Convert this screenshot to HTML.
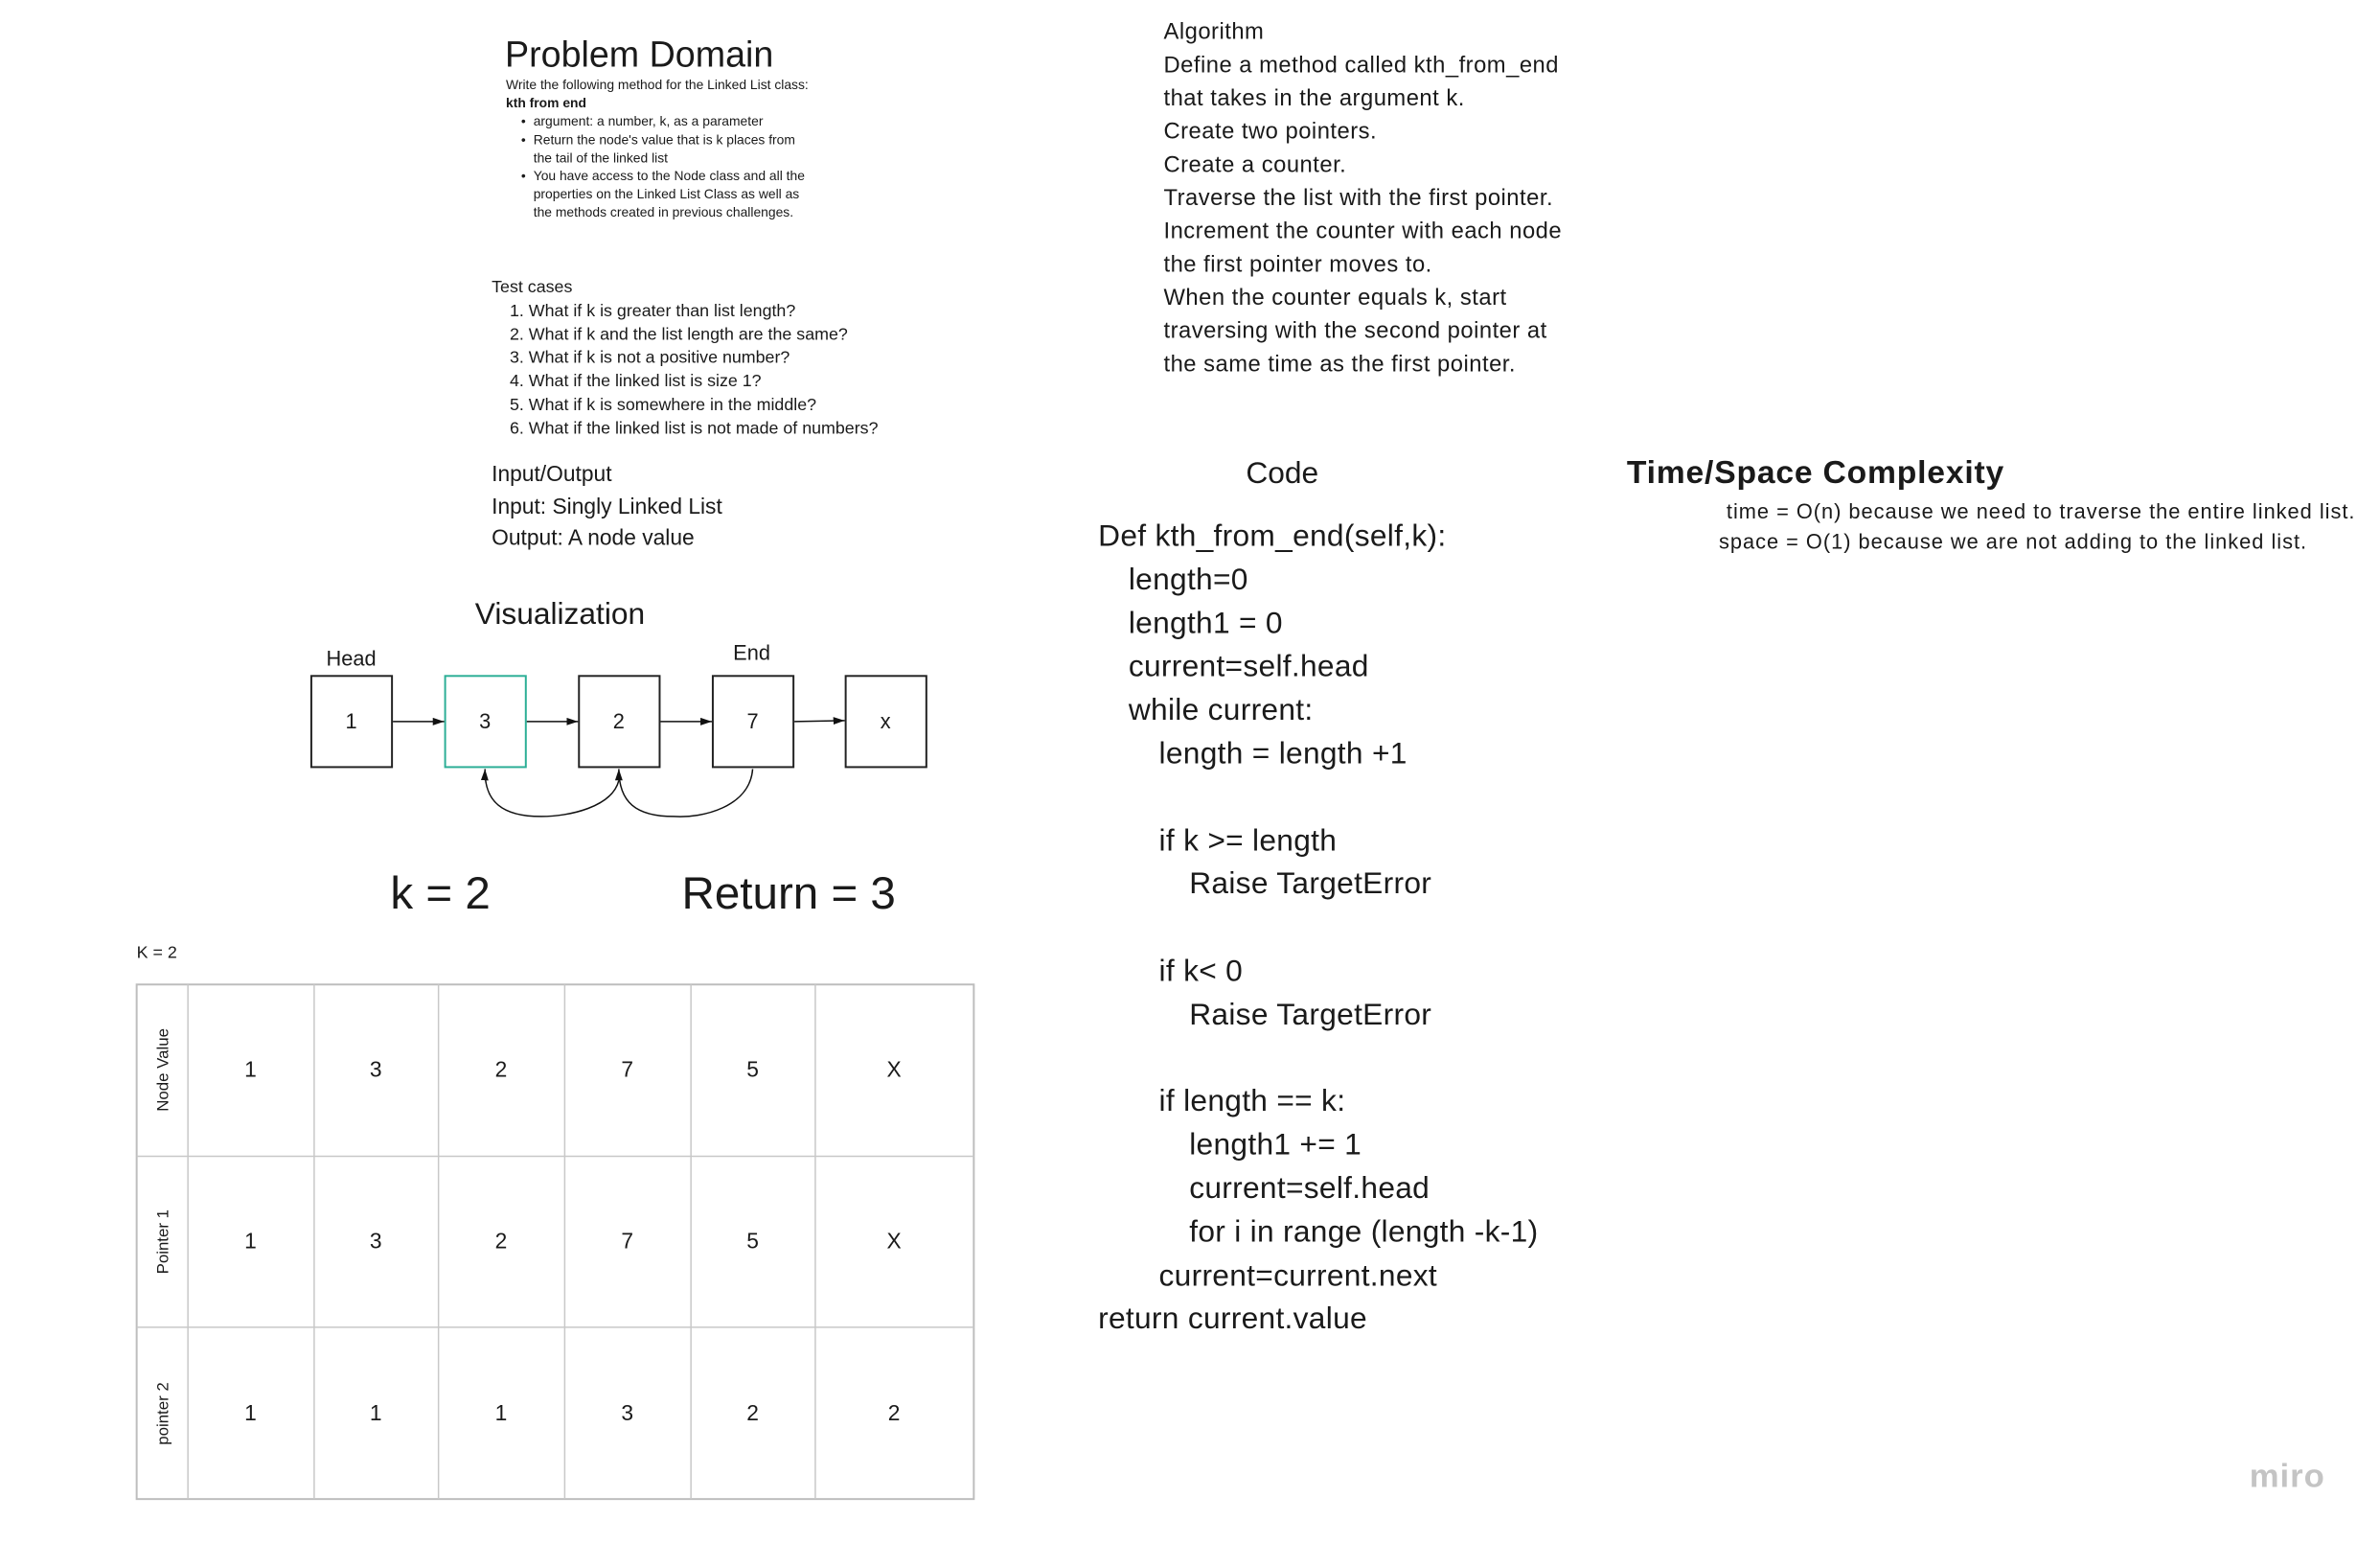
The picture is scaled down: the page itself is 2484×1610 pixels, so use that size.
<!DOCTYPE html>
<html><head><meta charset="utf-8"><style>
html,body{margin:0;padding:0;background:#fff;}
body{width:2484px;height:1610px;position:relative;overflow:hidden;font-family:"Liberation Sans",sans-serif;color:#1a1a1a;}
#w{position:absolute;left:0;top:0;width:2484px;height:1610px;transform:scale(0.9906);transform-origin:0 0;}
.a{position:absolute;white-space:nowrap;}
</style></head><body><div id="w">

<div class="a" style="left:532px;top:35px;font-size:38px;line-height:46px;">Problem Domain</div>
<div class="a" style="left:533px;top:80px;font-size:14px;line-height:19.2px;">
Write the following method for the Linked List class:<br>
<b>kth from end</b><br>
<span style="position:absolute;left:16px;top:38.4px">•</span><span style="position:absolute;left:16px;top:57.6px">•</span><span style="position:absolute;left:16px;top:96px">•</span>
<div style="padding-left:29px">argument: a number, k, as a parameter<br>Return the node's value that is k places from<br>the tail of the linked list<br>You have access to the Node class and all the<br>properties on the Linked List Class as well as<br>the methods created in previous challenges.</div>
</div>

<div class="a" style="left:518px;top:290px;font-size:18px;line-height:24.8px;">Test cases<br>
<div style="padding-left:19px">1. What if k is greater than list length?<br>2. What if k and the list length are the same?<br>3. What if k is not a positive number?<br>4. What if the linked list is size 1?<br>5. What if k is somewhere in the middle?<br>6. What if the linked list is not made of numbers?</div></div>

<div class="a" style="left:518px;top:483px;font-size:23px;line-height:33.5px;">Input/Output<br>Input: Singly Linked List<br>Output: A node value</div>

<div class="a" style="left:390px;width:400px;text-align:center;top:627px;font-size:32px;line-height:38px;">Visualization</div>
<div class="a" style="left:320px;width:100px;text-align:center;top:680px;font-size:22px;line-height:28px;">Head</div>
<div class="a" style="left:742px;width:100px;text-align:center;top:674px;font-size:22px;line-height:28px;">End</div>

<svg class="a" style="left:0;top:0" width="2484" height="1610">
<defs><marker id="ar" markerWidth="12" markerHeight="8" refX="12" refY="4" orient="auto" markerUnits="userSpaceOnUse"><path d="M0,0 L12,4 L0,8 z" fill="#111"/></marker></defs>
<g fill="#fff" stroke="#222" stroke-width="2">
<rect x="328" y="712" width="85" height="96"/>
<rect x="469" y="712" width="85" height="96" stroke="#2bae96"/>
<rect x="610" y="712" width="85" height="96"/>
<rect x="751" y="712" width="85" height="96"/>
<rect x="891" y="712" width="85" height="96"/>
</g>
<g stroke="#111" stroke-width="1.5" fill="none" marker-end="url(#ar)">
<line x1="414" y1="760" x2="468" y2="760"/>
<line x1="555" y1="760" x2="609" y2="760"/>
<line x1="696" y1="760" x2="750" y2="760"/>
<line x1="837" y1="760" x2="890" y2="759"/>
<path d="M793,810 C790,850 740,862 710,860 C670,860 652,845 652,810"/>
<path d="M652,822 C645,850 600,860 570,860 C530,860 510,845 511,810"/>
</g>
<g stroke="#c8c8c8" stroke-width="1.5" fill="none">
<rect x="144" y="1037" width="882" height="542" stroke="#bdbdbd" stroke-width="2"/>
<line x1="198" y1="1037" x2="198" y2="1579"/>
<line x1="331" y1="1037" x2="331" y2="1579"/>
<line x1="462" y1="1037" x2="462" y2="1579"/>
<line x1="595" y1="1037" x2="595" y2="1579"/>
<line x1="728" y1="1037" x2="728" y2="1579"/>
<line x1="859" y1="1037" x2="859" y2="1579"/>
<line x1="144" y1="1218" x2="1026" y2="1218"/>
<line x1="144" y1="1398" x2="1026" y2="1398"/>
</g>
<g font-family="Liberation Sans, sans-serif" font-size="22" text-anchor="middle" fill="#1a1a1a">
<text x="370" y="767">1</text><text x="511" y="767">3</text><text x="652" y="767">2</text><text x="793" y="767">7</text><text x="933" y="767">x</text>
<g font-size="23">
<text x="264" y="1134">1</text><text x="396" y="1134">3</text><text x="528" y="1134">2</text><text x="661" y="1134">7</text><text x="793" y="1134">5</text><text x="942" y="1134">X</text>
<text x="264" y="1315">1</text><text x="396" y="1315">3</text><text x="528" y="1315">2</text><text x="661" y="1315">7</text><text x="793" y="1315">5</text><text x="942" y="1315">X</text>
<text x="264" y="1496">1</text><text x="396" y="1496">1</text><text x="528" y="1496">1</text><text x="661" y="1496">3</text><text x="793" y="1496">2</text><text x="942" y="1496">2</text>
</g>
<g font-size="17">
<text transform="translate(177,1127) rotate(-90)">Node Value</text>
<text transform="translate(177,1308) rotate(-90)">Pointer 1</text>
<text transform="translate(177,1489) rotate(-90)">pointer 2</text>
</g>
</g>
</svg>

<div class="a" style="left:364px;width:200px;text-align:center;top:913px;font-size:48px;line-height:58px;">k = 2</div>
<div class="a" style="left:681px;width:300px;text-align:center;top:913px;font-size:48px;line-height:58px;">Return = 3</div>
<div class="a" style="left:144px;top:991px;font-size:18px;line-height:24px;">K = 2</div>

<div class="a" style="left:1226px;top:16px;font-size:24px;line-height:35px;letter-spacing:0.5px;">Algorithm<br>Define a method called kth_from_end<br>that takes in the argument k.<br>Create two pointers.<br>Create a counter.<br>Traverse the list with the first pointer.<br>Increment the counter with each node<br>the first pointer moves to.<br>When the counter equals k, start<br>traversing with the second pointer at<br>the same time as the first pointer.</div>

<div class="a" style="left:1251px;width:200px;text-align:center;top:479px;font-size:32px;line-height:38px;">Code</div>
<div class="a" style="left:1157px;top:542px;font-size:32px;line-height:45.8px;letter-spacing:0.3px;">Def kth_from_end(self,k):<br>
<span style="padding-left:32px">length=0</span><br>
<span style="padding-left:32px">length1 = 0</span><br>
<span style="padding-left:32px">current=self.head</span><br>
<span style="padding-left:32px">while current:</span><br>
<span style="padding-left:64px">length = length +1</span><br>&nbsp;<br>
<span style="padding-left:64px">if k &gt;= length</span><br>
<span style="padding-left:96px">Raise TargetError</span><br>&nbsp;<br>
<span style="padding-left:64px">if k&lt; 0</span><br>
<span style="padding-left:96px">Raise TargetError</span><br>&nbsp;<br>
<span style="padding-left:64px">if length == k:</span><br>
<span style="padding-left:96px">length1 += 1</span><br>
<span style="padding-left:96px">current=self.head</span><br>
<span style="padding-left:96px">for i in range (length -k-1)</span><br>
<span style="padding-left:64px">current=current.next</span><br>
return current.value</div>

<div class="a" style="left:1714px;top:477px;font-size:34px;line-height:42px;font-weight:bold;letter-spacing:0.8px;">Time/Space Complexity</div>
<div class="a" style="left:1819px;top:523px;font-size:22px;line-height:32px;letter-spacing:1px;">time = O(n) because we need to traverse the entire linked list.</div>
<div class="a" style="left:1811px;top:555px;font-size:22px;line-height:32px;letter-spacing:1px;">space = O(1) because we are not adding to the linked list.</div>

<div class="a" style="left:2370px;top:1534px;font-size:35px;line-height:42px;color:#c4c4c4;font-weight:bold;letter-spacing:1px;">miro</div>
</div></body></html>
